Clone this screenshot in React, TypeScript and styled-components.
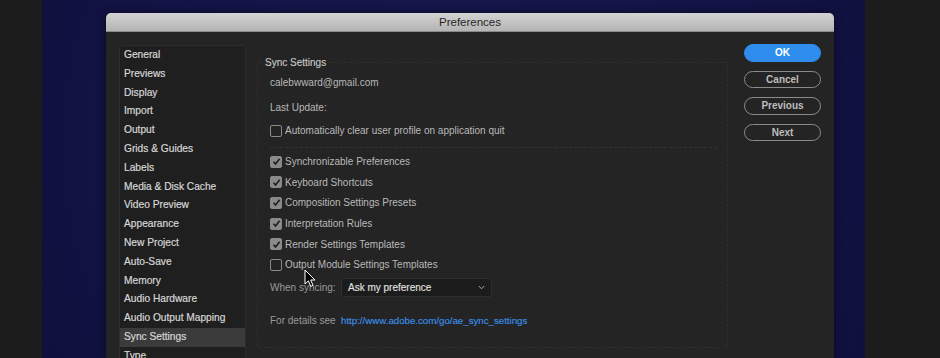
import React from 'react'
import styled, { createGlobalStyle } from 'styled-components'

const GlobalStyle = createGlobalStyle`
  html, body {
    margin: 0;
    padding: 0;
    background: #1c1c1c;
    overflow: hidden;
  }
  * { box-sizing: border-box; }
`

const Page = styled.div`
  position: relative;
  display: flex;
  width: 940px;
  height: 358px;
  background: #1c1c1c;
  font-family: "Liberation Sans", Arial, sans-serif;
  font-size: 10px;
  overflow: hidden;
`

const SideStrip = styled.div<{ $w: number }>`
  width: ${({ $w }) => $w}px;
  flex-shrink: 0;
  background: #1c1c1c;
`

const Desktop = styled.div`
  width: 823px;
  flex-shrink: 0;
  background: radial-gradient(circle at 50% 40%, #18184f 0%, #131346 70%, #10103d 100%);
  padding: 13px 0 0 64px;
`

const Dialog = styled.div`
  width: 728px;
  height: 345px;
  display: flex;
  flex-direction: column;
  border-radius: 5px 5px 0 0;
  overflow: hidden;
  background: #242424;
  box-shadow: 0 0 8px rgba(0, 0, 0, 0.5);
`

const TitleBar = styled.div`
  height: 19px;
  flex-shrink: 0;
  display: flex;
  align-items: center;
  justify-content: center;
  background: linear-gradient(#d3d3d3, #b4b4b4);
  border-bottom: 1px solid #8a8a8a;
  color: #262626;
  font-size: 11.5px;
`

const Body = styled.div`
  flex: 1;
  display: flex;
  align-items: flex-start;
  padding: 12px 13px 0 13px;
  background: #242424;
`

const Sidebar = styled.ul`
  list-style: none;
  margin: 1px 0 0 0;
  padding: 0;
  width: 127px;
  height: 330px;
  flex-shrink: 0;
  background: #1f1f1f;
  border: 1px solid #2c2c2c;
  border-radius: 3px;
  overflow: hidden;
`

const SideItem = styled.li<{ $active?: boolean }>`
  height: 18.8px;
  line-height: 18.8px;
  padding-left: 4px;
  color: #d6d6d6;
  font-size: 10.2px;
  -webkit-text-stroke: 0.2px #d6d6d6;
  white-space: nowrap;
  background: ${({ $active }) => ($active ? '#3b3b3b' : 'transparent')};
`

const Group = styled.fieldset`
  margin: 11.5px 0 0 11px;
  width: 471px;
  height: 292px;
  flex-shrink: 0;
  padding: 4px 10px 0 12px;
  border: 1px dashed #2f2f2f;
  border-radius: 2px;
  min-width: 0;
`

const Legend = styled.legend`
  margin-left: -8px;
  padding: 0 3px;
  line-height: 13px;
  font-size: 10px;
  color: #c8c8c8;
  -webkit-text-stroke: 0.15px #c8c8c8;
`

const Row = styled.div<{ $mt?: number; $h?: number }>`
  display: flex;
  align-items: center;
  gap: 3px;
  margin-top: ${({ $mt }) => $mt ?? 0}px;
  height: ${({ $h }) => $h ?? 20}px;
  color: #b9b9b9;
  font-size: 10px;
  white-space: nowrap;
`

const CheckList = styled.div`
  margin-top: 4px;
`

const Divider = styled.div<{ $mt: number }>`
  margin-top: ${({ $mt }) => $mt}px;
  height: 0;
  border-top: 1px dashed #323232;
`

const Box = styled.span<{ $checked?: boolean }>`
  width: 12px;
  height: 12px;
  flex-shrink: 0;
  border-radius: 2px;
  display: inline-flex;
  align-items: center;
  justify-content: center;
  background: ${({ $checked }) => ($checked ? '#8a8a8a' : 'transparent')};
  border: 1px solid #8a8a8a;
`

const Label = styled.span<{ $dim?: boolean }>`
  width: 71px;
  flex-shrink: 0;
  color: ${({ $dim }) => ($dim ? '#9a9a9a' : '#b9b9b9')};
`

const Select = styled.div`
  width: 151px;
  height: 19px;
  display: flex;
  align-items: center;
  justify-content: space-between;
  padding: 0 6px 0 6px;
  background: #1c1c1c;
  border: 1px solid #2e2e2e;
  border-radius: 2px;
  color: #e2e2e2;
  -webkit-text-stroke: 0.12px #e2e2e2;
  margin-left: -3px;
`

const Link = styled.a`
  color: #3b8fe6;
  font-size: 9.7px;
  text-decoration: none;
  margin-left: -3px;
  -webkit-text-stroke: 0.15px #3b8fe6;
`

const ButtonColumn = styled.div`
  margin-left: 16px;
  width: 77px;
  flex-shrink: 0;
  display: flex;
  flex-direction: column;
  gap: 9px;
`

const Button = styled.button<{ $primary?: boolean }>`
  height: 17.5px;
  width: 77px;
  padding: 0;
  border-radius: 9px;
  font-family: "Liberation Sans", Arial, sans-serif;
  font-size: 10px;
  font-weight: 700;
  color: ${({ $primary }) => ($primary ? '#ffffff' : '#bdbdbd')};
  background: ${({ $primary }) => ($primary ? '#2f8ded' : 'transparent')};
  border: ${({ $primary }) => ($primary ? '1px solid #2f8ded' : '1.5px solid #8a8a8a')};
`

const Cursor = styled.svg`
  position: absolute;
  left: 304px;
  top: 269px;
`

const Check = () => (
  <svg width="9" height="9" viewBox="0 0 9 9">
    <polyline points="1.5,4.8 3.6,7 7.6,1.8" fill="none" stroke="#1e1e1e" strokeWidth="1.6" />
  </svg>
)

const Chevron = () => (
  <svg width="7" height="5" viewBox="0 0 7 5">
    <polyline points="0.8,1 3.5,3.8 6.2,1" fill="none" stroke="#a8a8a8" strokeWidth="1" />
  </svg>
)

const categories = [
  'General', 'Previews', 'Display', 'Import', 'Output', 'Grids & Guides', 'Labels',
  'Media & Disk Cache', 'Video Preview', 'Appearance', 'New Project', 'Auto-Save',
  'Memory', 'Audio Hardware', 'Audio Output Mapping', 'Sync Settings', 'Type',
]

const syncItems = [
  { label: 'Synchronizable Preferences', checked: true },
  { label: 'Keyboard Shortcuts', checked: true },
  { label: 'Composition Settings Presets', checked: true },
  { label: 'Interpretation Rules', checked: true },
  { label: 'Render Settings Templates', checked: true },
  { label: 'Output Module Settings Templates', checked: false },
]

const App = () => {
  return (
    <Page>
      <GlobalStyle />
      <SideStrip $w={42} />
      <Desktop>
        <Dialog>
          <TitleBar>Preferences</TitleBar>
          <Body>
            <Sidebar>
              {categories.map(c => (
                <SideItem key={c} $active={c === 'Sync Settings'}>{c}</SideItem>
              ))}
            </Sidebar>

            <Group>
              <Legend>Sync Settings</Legend>
              <Row>calebwward@gmail.com</Row>
              <Row $mt={5}>Last Update:</Row>
              <Row $mt={3}>
                <Box />
                Automatically clear user profile on application quit
              </Row>
              <Divider $mt={6} />
              <CheckList>
                {syncItems.map(item => (
                  <Row key={item.label} $h={20.6}>
                    <Box $checked={item.checked}>{item.checked && <Check />}</Box>
                    {item.label}
                  </Row>
                ))}
              </CheckList>
              <Row $mt={3} $h={19}>
                <Label $dim>When syncing:</Label>
                <Select>
                  Ask my preference
                  <Chevron />
                </Select>
              </Row>
              <Row $mt={13}>
                <Label $dim>For details see</Label>
                <Link href="#">http://www.adobe.com/go/ae_sync_settings</Link>
              </Row>
            </Group>

            <ButtonColumn>
              <Button $primary>OK</Button>
              <Button>Cancel</Button>
              <Button>Previous</Button>
              <Button>Next</Button>
            </ButtonColumn>
          </Body>
        </Dialog>
      </Desktop>
      <SideStrip $w={75} />
      <Cursor width="12" height="19" viewBox="0 0 12 19">
        <path d="M1 1 L1 15 L4.4 11.8 L6.8 17.4 L9 16.4 L6.7 11 L11 11 Z" fill="#000" stroke="#fff" strokeWidth="1" />
      </Cursor>
    </Page>
  )
}

export default App
